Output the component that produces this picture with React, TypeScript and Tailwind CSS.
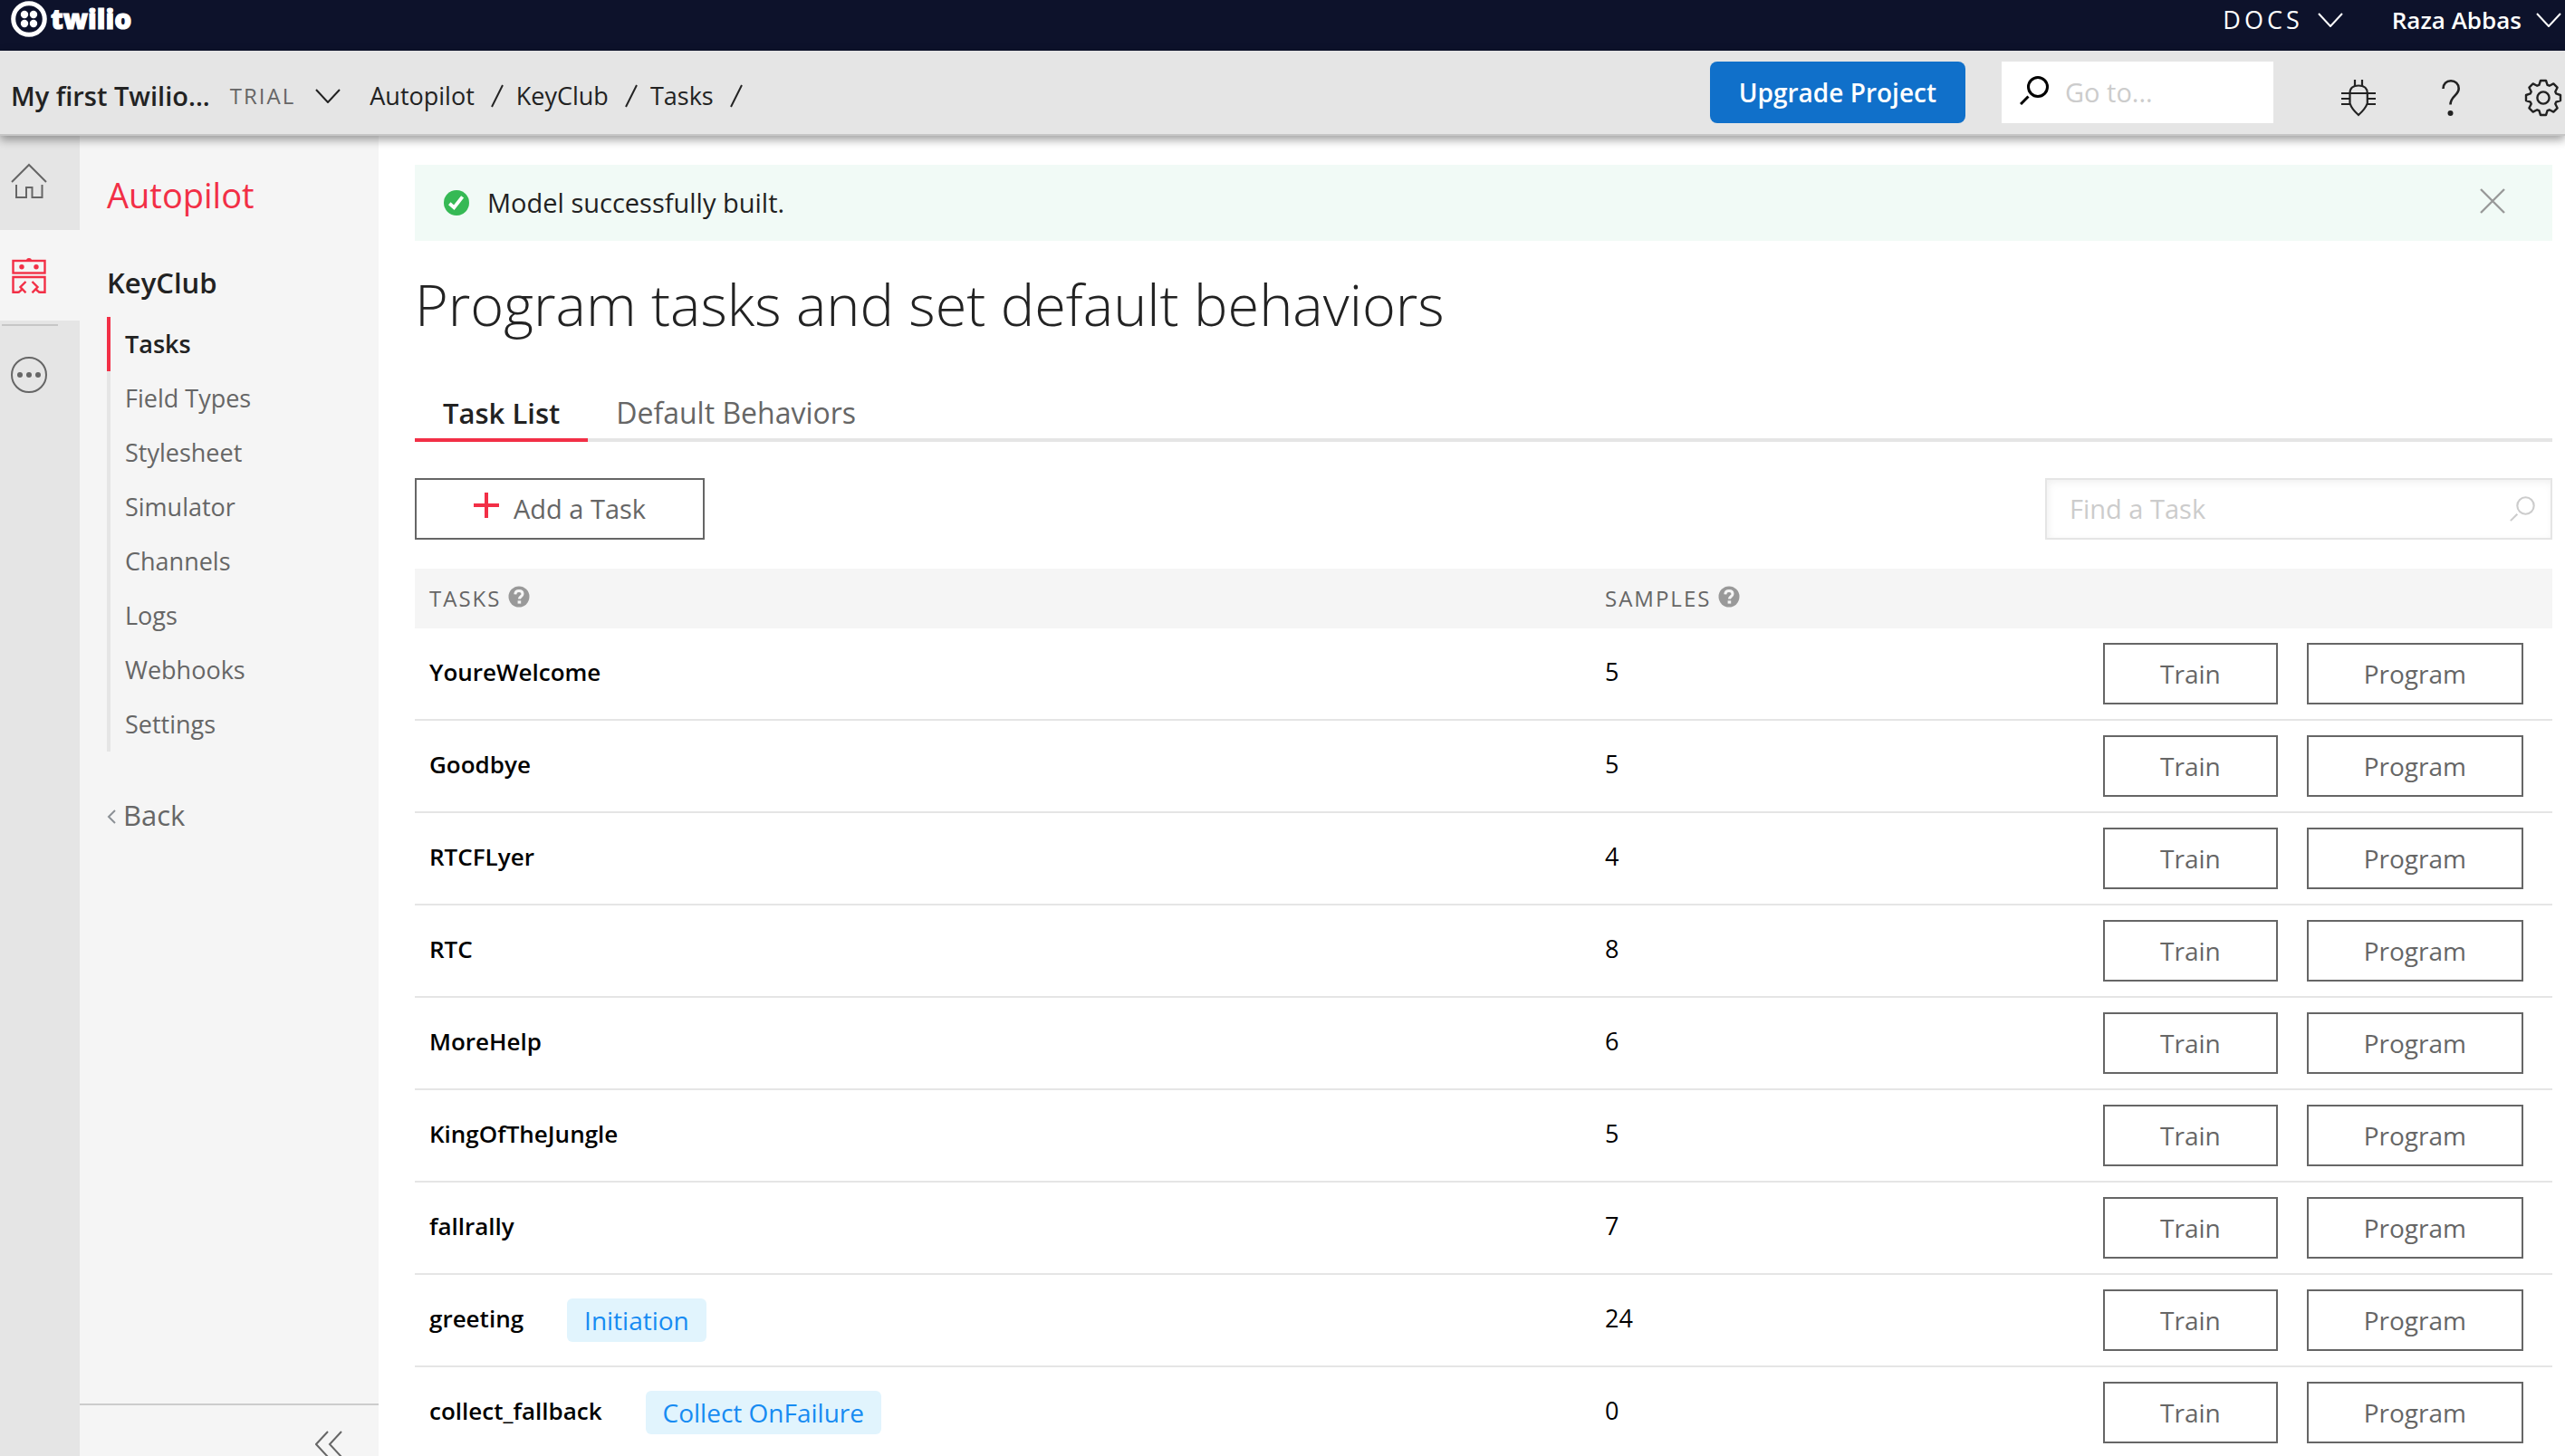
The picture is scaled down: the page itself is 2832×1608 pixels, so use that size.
import type { ReactNode } from "react";

type Task = { name: string; samples: number; tag?: string };

const tasks: Task[] = [
  { name: "YoureWelcome", samples: 5 },
  { name: "Goodbye", samples: 5 },
  { name: "RTCFLyer", samples: 4 },
  { name: "RTC", samples: 8 },
  { name: "MoreHelp", samples: 6 },
  { name: "KingOfTheJungle", samples: 5 },
  { name: "fallrally", samples: 7 },
  { name: "greeting", samples: 24, tag: "Initiation" },
  { name: "collect_fallback", samples: 0, tag: "Collect OnFailure" },
];

const navItems = ["Tasks", "Field Types", "Stylesheet", "Simulator", "Channels", "Logs", "Webhooks", "Settings"];

/* Outline of an eight-toothed cog centred on (22, 22). */
function cogPath() {
  const points: string[] = [];
  const profile = [
    [-4.6, -14.2],
    [-3, -19],
    [3, -19],
    [4.6, -14.2],
  ];
  for (let i = 0; i < 8; i++) {
    const a = (i * Math.PI) / 4;
    for (const [x, y] of profile) {
      const px = 22 + x * Math.cos(a) - y * Math.sin(a);
      const py = 22 + x * Math.sin(a) + y * Math.cos(a);
      points.push(`${px.toFixed(2)} ${py.toFixed(2)}`);
    }
  }
  return `M${points.join("L")}Z`;
}

function Chevron() {
  return (
    <svg viewBox="0 0 28 16" className="h-4 w-7" fill="none" stroke="currentColor" strokeWidth="2" aria-hidden="true">
      <path d="M1 1L14 15L27 1" />
    </svg>
  );
}

function Magnifier({ className, stroke }: { className: string; stroke: number }) {
  return (
    <svg viewBox="0 0 32 32" className={className} fill="none" stroke="currentColor" strokeWidth={stroke} aria-hidden="true">
      <circle cx="20" cy="12" r="10.5" />
      <path d="M9.5 22.5L1 31" />
    </svg>
  );
}

function HelpIcon() {
  return (
    <svg viewBox="0 0 24 24" className="mb-1 h-6 w-6" aria-hidden="true">
      <circle cx="12" cy="12" r="11.5" fill="#999999" />
      <path d="M7.8 9.4C8 6.6 9.6 5.6 12 5.6C14.4 5.6 16 7 16 9C16 11.8 12.4 11.8 12.4 14.6" fill="none" stroke="#f5f5f5" strokeWidth="3" />
      <rect x="10.6" y="16.4" width="3.6" height="3.2" fill="#f5f5f5" />
    </svg>
  );
}

function TopBar() {
  return (
    <header className="flex h-14 shrink-0 items-center justify-between bg-[#0d122b] pr-1 pb-[14px] pl-3 text-white">
      <a href="#home" aria-label="twilio home" className="flex items-center gap-1">
        <svg viewBox="0 0 40 40" className="h-10 w-10" aria-hidden="true">
          <circle cx="20" cy="20" r="17.3" fill="none" stroke="white" strokeWidth="5" />
          <circle cx="15" cy="15" r="4.2" fill="white" />
          <circle cx="25" cy="15" r="4.2" fill="white" />
          <circle cx="15" cy="25" r="4.2" fill="white" />
          <circle cx="25" cy="25" r="4.2" fill="white" />
        </svg>
        <span className="text-[30px] leading-8 font-extrabold [-webkit-text-stroke:1px_white]">twilio</span>
      </a>
      <div className="flex items-center gap-[54px] pt-[2px]">
        <button className="flex items-center gap-4 text-[27px] leading-8 font-medium tracking-[4px]">
          DOCS
          <Chevron />
        </button>
        <button className="flex items-center gap-4 text-[26px] leading-8 font-semibold">
          Raza Abbas
          <Chevron />
        </button>
      </div>
    </header>
  );
}

function IconButton({ label, children }: { label: string; children: ReactNode }) {
  return (
    <button aria-label={label} className="pt-3">
      {children}
    </button>
  );
}

function ProjectBar() {
  return (
    <div className="relative z-10 flex h-[94px] shrink-0 items-center justify-between border-b-2 border-[#c6c6c6] bg-[#e5e5e5] pr-[2px] pl-3 text-[#222222] shadow-[0_4px_10px_rgba(0,0,0,0.4)]">
      <div className="flex items-center gap-8 pt-2">
        <button className="flex items-center gap-[22px]">
          <span className="text-[29px] leading-8 font-semibold">My first Twilio...</span>
          <span className="text-2xl leading-8 tracking-[2px] text-[#666666]">TRIAL</span>
          <Chevron />
        </button>
        <nav aria-label="Breadcrumb" className="flex items-center text-[27px] leading-8">
          {["Autopilot", "KeyClub", "Tasks"].map((crumb) => (
            <span key={crumb} className="flex items-center">
              <a href={`#${crumb}`}>{crumb}</a>
              <svg viewBox="0 0 14 26" className="mr-[14px] ml-[18px] h-[26px] w-[14px]" fill="none" stroke="currentColor" strokeWidth="2" aria-hidden="true">
                <path d="M1 25L13 1" />
              </svg>
            </span>
          ))}
        </nav>
      </div>
      <div className="flex items-center">
        <button className="h-[68px] rounded-lg bg-[#1070ca] px-8 text-[28px] leading-8 font-semibold text-white">
          Upgrade Project
        </button>
        <div className="ml-10 flex h-[68px] w-[300px] items-center gap-[18px] bg-white px-5">
          <Magnifier className="mb-1 h-8 w-8 shrink-0 text-black" stroke={3} />
          <input type="text" aria-label="Go to" placeholder="Go to..." className="w-full min-w-0 text-[29px] leading-8 outline-none placeholder:text-[#cccccc]" />
        </div>
        <div className="ml-[72px] flex items-center gap-[62px]">
          <IconButton label="Debugger">
            <svg viewBox="0 0 44 44" className="h-11 w-11" fill="none" stroke="currentColor" strokeWidth="2.2">
              <path d="M12.5 17C12.5 11 16 8.5 22 8.5S31.8 11 31.8 17V28C30 33 26 37.5 22 41C18 37.5 14 33 12.5 28Z" />
              <path d="M3 17H41M3 23H12.5M31.8 23H41M3 29H12.5M31.8 29H41M18 2V9M26 2V9" />
            </svg>
          </IconButton>
          <IconButton label="Help">
            <svg viewBox="0 0 36 44" className="h-11 w-9" fill="none" stroke="currentColor" strokeWidth="2.6">
              <path d="M9.5 12C9.5 6.5 13 3.3 18 3.3S26.7 6.8 26.7 11.8C26.7 19.5 17.5 20 17.5 29.5" />
              <circle cx="17.5" cy="39" r="3" fill="currentColor" stroke="none" />
            </svg>
          </IconButton>
          <IconButton label="Settings">
            <svg viewBox="0 0 44 44" className="h-11 w-11" fill="none" stroke="currentColor" strokeWidth="2.4" strokeLinejoin="round">
              <path d={cogPath()} />
              <circle cx="22" cy="22" r="6.6" />
            </svg>
          </IconButton>
        </div>
      </div>
    </div>
  );
}

function Rail() {
  return (
    <nav aria-label="Products" className="w-[88px] shrink-0 bg-[#e5e5e5] text-[#666666]">
      <a href="#home" aria-label="Home" className="flex h-[104px] items-center pb-1 pl-3">
        <svg viewBox="0 0 40 40" className="h-10 w-10" fill="none" stroke="currentColor" strokeWidth="2">
          <path d="M1 21L20 2L39 21M6 24V38H17V27H23.5V38H34.5V24" />
        </svg>
      </a>
      <a href="#autopilot" aria-label="Autopilot" className="flex h-[100px] items-center bg-[#f5f5f5] pl-3 text-[#f22f46]">
        <svg viewBox="0 0 40 40" className="h-10 w-10" fill="none" stroke="currentColor" strokeWidth="2.4">
          <rect x="2.5" y="4" width="35" height="13.5" />
          <path d="M17 4A3 3 0 0 1 23 4Z" fill="currentColor" stroke="none" />
          <circle cx="12" cy="10.8" r="2.7" fill="currentColor" stroke="none" />
          <circle cx="28" cy="10.8" r="2.7" fill="currentColor" stroke="none" />
          <path d="M8.5 38.8H2.5V22H37.5V38.8H31.5" />
          <path d="M16.5 27L10.5 33L16.5 39.3M8 39.3L13 35M23.5 27L29.5 33L23.5 39.3M32 39.3L27 35" />
        </svg>
      </a>
      <hr className="mt-1 mr-6 ml-[2px] border-t-2 border-[#c6c6c6]" />
      <button aria-label="All products" className="flex h-[108px] w-full items-center pl-3">
        <svg viewBox="0 0 40 40" className="h-10 w-10" fill="none" stroke="currentColor" strokeWidth="2">
          <circle cx="20" cy="20" r="19" />
          <g fill="currentColor" stroke="none">
            <circle cx="10" cy="20" r="3" />
            <circle cx="20" cy="20" r="3" />
            <circle cx="30" cy="20" r="3" />
          </g>
        </svg>
      </button>
    </nav>
  );
}

function Sidebar() {
  return (
    <aside className="flex w-[330px] shrink-0 flex-col bg-[#f5f5f5] text-[#666666]">
      <div className="px-[30px] pt-10">
        <h2 className="text-[38px] leading-[50px] text-[#f22f46]">Autopilot</h2>
        <h3 className="mt-12 text-[31px] leading-12 font-semibold text-[#222222]">KeyClub</h3>
        <ul className="mt-[14px]">
          {navItems.map((item, i) => (
            <li key={item}>
              <a
                href={`#${item}`}
                className={
                  i === 0
                    ? "block border-l-4 border-[#f22f46] pl-4 text-[27px] leading-[60px] font-semibold text-[#222222]"
                    : "block border-l-4 border-[#e5e5e5] pl-4 text-[27px] leading-[60px]"
                }
              >
                {item}
              </a>
            </li>
          ))}
        </ul>
        <a href="#back" className="mt-[46px] flex items-center gap-2 text-[31px] leading-12">
          <svg viewBox="0 0 10 16" className="mt-1 h-4 w-[10px]" fill="none" stroke="#8c9196" strokeWidth="2" aria-hidden="true">
            <path d="M9 1L2 8L9 15" />
          </svg>
          Back
        </a>
      </div>
      <div className="mt-auto flex h-[58px] items-start justify-end border-t-2 border-[#cccccc] pt-7 pr-10">
        <button aria-label="Collapse menu">
          <svg viewBox="0 0 30 30" className="h-[30px] w-[30px]" fill="none" stroke="currentColor" strokeWidth="2">
            <path d="M14 1L1 15L14 29M29 1L16 15L29 29" />
          </svg>
        </button>
      </div>
    </aside>
  );
}

function OutlineButton({ children }: { children: ReactNode }) {
  return (
    <button className="h-[68px] border-2 border-[#666666] px-[61px] text-[28px] leading-8 text-[#666666]">{children}</button>
  );
}

function TaskTable() {
  return (
    <table className="mt-8 w-full border-separate border-spacing-0 text-left text-[27px] leading-8 text-black">
      <thead>
        <tr className="h-[66px] bg-[#f5f5f5] text-2xl leading-8 text-[#666666]">
          <th className="w-[55%] px-4 py-0 font-normal">
            <span className="flex items-center gap-2">
              <span className="tracking-[2px]">TASKS</span>
              <HelpIcon />
            </span>
          </th>
          <th className="px-4 py-0 font-normal">
            <span className="flex items-center gap-2">
              <span className="tracking-[2px]">SAMPLES</span>
              <HelpIcon />
            </span>
          </th>
          <th aria-label="Actions" className="p-0" />
        </tr>
      </thead>
      <tbody>
        {tasks.map((task) => (
          <tr key={task.name} className="h-[102px]">
            <td className="border-b-2 border-[#e5e5e5] px-4 py-0">
              <div className="flex items-center gap-12">
                <span className="pb-1 text-[26px] leading-8 font-semibold">{task.name}</span>
                {task.tag && (
                  <span className="rounded-md bg-[#e1f4fd] px-[19px] text-[28px] leading-12 text-[#168bf2]">{task.tag}</span>
                )}
              </div>
            </td>
            <td className="border-b-2 border-[#e5e5e5] px-4 pt-0 pb-1">{task.samples}</td>
            <td className="border-b-2 border-[#e5e5e5] py-0 pr-8 pl-0">
              <div className="flex justify-end gap-8">
                <OutlineButton>Train</OutlineButton>
                <OutlineButton>Program</OutlineButton>
              </div>
            </td>
          </tr>
        ))}
      </tbody>
    </table>
  );
}

export default function App() {
  return (
    <div className="flex h-screen flex-col overflow-hidden bg-white font-['Open_Sans',sans-serif]">
      <TopBar />
      <ProjectBar />
      <div className="flex min-h-0 flex-1">
        <Rail />
        <Sidebar />
        <main className="min-w-0 flex-1 overflow-hidden pt-8 pr-[14px] pl-10 text-[#222222]">
          <div role="status" className="flex h-[84px] items-center bg-[#f1faf6] pr-[52px] pl-8">
            <svg viewBox="0 0 28 28" className="h-7 w-7" fill="none" aria-hidden="true">
              <circle cx="14" cy="14" r="14" fill="#36b955" />
              <path d="M6.3 14.8L11.3 19.2L20.6 7.4" stroke="white" strokeWidth="3.8" />
            </svg>
            <p className="ml-5 text-[29px] leading-8">Model successfully built.</p>
            <button aria-label="Dismiss" className="ml-auto pb-1">
              <svg viewBox="0 0 28 28" className="h-7 w-7" stroke="#999999" strokeWidth="2.4">
                <path d="M1 1L27 27M27 1L1 27" />
              </svg>
            </button>
          </div>
          <h1 className="mt-7 text-[63px] leading-[84px] font-light">Program tasks and set default behaviors</h1>
          <div role="tablist" className="mt-[50px] flex border-b-4 border-[#e5e5e5] text-[32px] leading-[56px]">
            <button role="tab" aria-selected="true" className="-mb-1 border-b-4 border-[#f22f46] px-[31px] text-[31px] leading-[56px] font-semibold">
              Task List
            </button>
            <button role="tab" aria-selected="false" className="px-[31px] text-[#666666]">
              Default Behaviors
            </button>
          </div>
          <div className="mt-10 flex items-center justify-between">
            <button className="flex h-[68px] w-[320px] items-center justify-center gap-4 border-2 border-[#666666] text-[29px] leading-8 text-[#666666]">
              <svg viewBox="0 0 28 28" className="mb-2 h-7 w-7" stroke="#f22f46" strokeWidth="4" aria-hidden="true">
                <path d="M14 0V28M0 14H28" />
              </svg>
              Add a Task
            </button>
            <div className="flex h-[68px] w-[560px] items-center border-2 border-[#e5e5e5] pr-[17px] pl-[25px] text-[#cccccc] shadow-[inset_2px_3px_8px_rgba(0,0,0,0.06)]">
              <input type="search" aria-label="Find a Task" placeholder="Find a Task" className="w-full min-w-0 text-[29px] leading-8 text-[#222222] outline-none placeholder:text-[#cccccc]" />
              <Magnifier className="h-7 w-7 shrink-0" stroke={2.4} />
            </div>
          </div>
          <TaskTable />
        </main>
      </div>
    </div>
  );
}
